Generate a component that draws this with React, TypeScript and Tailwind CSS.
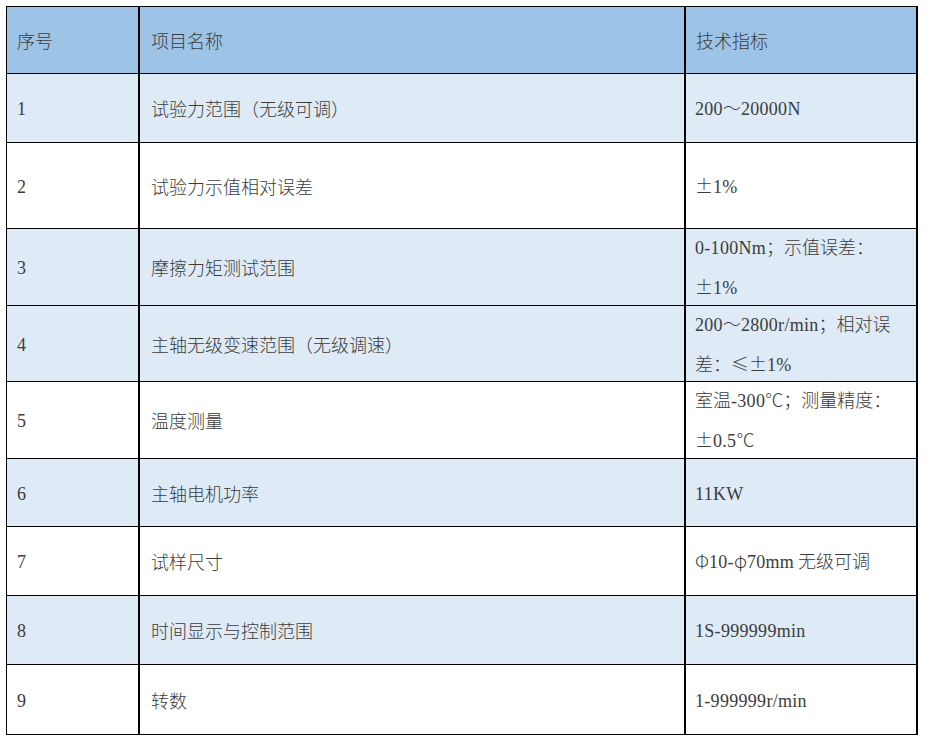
import React from 'react';

// ─── Data ─────────────────────────────────────────────────────────────────────

interface SpecRow {
  no: string;
  name: string;
  value: string[];
  height: string;
  shaded: boolean;
}

const rows: SpecRow[] = [
  { no: '1', name: '试验力范围（无级可调）', value: ['200～20000N'], height: 'h-[69px]', shaded: true },
  { no: '2', name: '试验力示值相对误差', value: ['±1%'], height: 'h-[86px]', shaded: false },
  { no: '3', name: '摩擦力矩测试范围', value: ['0-100Nm；示值误差：', '±1%'], height: 'h-[77px]', shaded: true },
  { no: '4', name: '主轴无级变速范围（无级调速）', value: ['200～2800r/min；相对误', '差：≤±1%'], height: 'h-[76px]', shaded: true },
  { no: '5', name: '温度测量', value: ['室温-300℃；测量精度：', '±0.5℃'], height: 'h-[77px]', shaded: false },
  { no: '6', name: '主轴电机功率', value: ['11KW'], height: 'h-[68px]', shaded: true },
  { no: '7', name: '试样尺寸', value: ['Φ10-φ70mm 无级可调'], height: 'h-[69px]', shaded: false },
  { no: '8', name: '时间显示与控制范围', value: ['1S-999999min'], height: 'h-[69px]', shaded: true },
  { no: '9', name: '转数', value: ['1-999999r/min'], height: 'h-[70px]', shaded: false },
];

// ─── Text helper: latin runs in a serif face, CJK in Noto ────────────────────

function Mixed({ text }: { text: string }) {
  const parts = text.split(/([\x21-\x7e]+)/).filter((p) => p.length > 0);
  return (
    <>
      {parts.map((p, i) =>
        /^[\x21-\x7e]+$/.test(p) ? (
          <span key={i} className="font-['Liberation_Serif',serif] tracking-[0.3px]">
            {p}
          </span>
        ) : (
          <span key={i}>{p}</span>
        )
      )}
    </>
  );
}

function Cell({
  width,
  pad,
  lines,
}: {
  width: string;
  pad: string;
  lines: string[];
}) {
  return (
    <div className={`${width} ${pad} shrink-0 border-r-2 border-black flex flex-col justify-center leading-[38px]`}>
      {lines.map((l) => (
        <div key={l} className="whitespace-nowrap">
          <Mixed text={l} />
        </div>
      ))}
    </div>
  );
}

// ─── Main ─────────────────────────────────────────────────────────────────────

export default function App() {
  return (
    <div className="w-[930px] h-[739px] bg-white pt-[6px] pl-[6px] font-['Noto_Sans_CJK_SC',sans-serif] font-light text-[18px] text-[#3c3c3c]">
      <div className="w-[912px] border-l border-t border-black">
        <div className="flex h-[67px] bg-[#9dc3e6] border-b border-black">
          <Cell width="w-[133px]" pad="pl-[10px]" lines={['序号']} />
          <Cell width="w-[546px]" pad="pl-[11px]" lines={['项目名称']} />
          <Cell width="w-[232px]" pad="pl-[10px]" lines={['技术指标']} />
        </div>
        {rows.map((r) => (
          <div
            key={r.no}
            className={`flex ${r.height} border-b border-black ${r.shaded ? 'bg-[#deebf7]' : 'bg-white'}`}
          >
            <Cell width="w-[133px]" pad="pl-[10px]" lines={[r.no]} />
            <Cell width="w-[546px]" pad="pl-[11px]" lines={[r.name]} />
            <Cell width="w-[232px]" pad="pl-[9px]" lines={r.value} />
          </div>
        ))}
      </div>
    </div>
  );
}
